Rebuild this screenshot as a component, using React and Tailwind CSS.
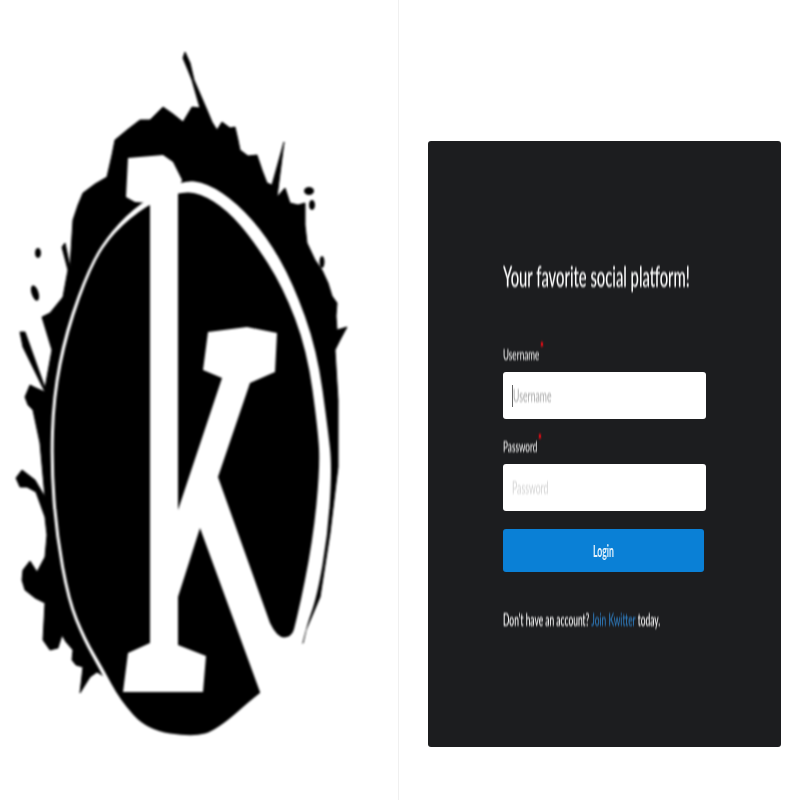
const blob = "M183,58 L185,52 L190,63 L194,80 L207,110 L212,122 L217,130 L222,122 L230,128 L235,127 L238,140 L240,150 L248,156 L257,155 L262,170 L267,183 L272,185 L284,142 L277,197 L285,188 L290,203 L298,205 L305,203 L305,225 L307,243 L315,260 L322,270 L328,283 L332,296 L337,303 L336,316 L337,330 L347,327 L340,340 L335,350 L338,400 L338,467 L330,533 L320,597 L306,630 L303,643 L280,650 L200,700 L110,680 L97,672 L90,677 L80,693 L83,667 L76,665 L72,660 L73,650 L66,642 L62,635 L58,648 L50,650 L43,640 L45,603 L35,598 L25,590 L22,580 L23,570 L30,561 L37,572 L45,557 L47,535 L45,517 L36,492 L27,487 L20,487 L16,478 L22,470 L35,480 L45,497 L40,443 L33,410 L28,405 L25,397 L30,385 L36,388 L45,392 L23,347 L20,332 L25,332 L45,388 L52,350 L42,317 L50,313 L63,297 L68,270 L62,247 L65,243 L70,267 L73,220 L78,205 L83,193 L95,184 L107,177 L112,155 L115,140 L127,130 L140,120 L150,120 L163,107 L173,114 L183,122 L192,107 L200,108 L192,80 L188,70 Z";

const ringOuter = [[182,180],[207,183],[237,203],[267,237],[293,283],[317,350],[328,430],[332,467],[328,533],[317,597],[305,630],[290,700],[193,760],[150,740],[115,700],[100,670],[83,640],[67,600],[55,533],[50,467],[52,397],[65,330],[90,263],[112,230],[140,203]];
const inner = [[178,192],[200,193],[227,210],[253,240],[283,287],[307,350],[318,430],[320,467],[313,540],[297,620],[280,680],[260,692],[217,730],[193,737],[147,730],[120,700],[103,668],[86,639],[70,600],[58,533],[53,467],[55,397],[68,332],[92,265],[114,232],[147,205]];

function smooth(pts) {
  const mid = (a, b) => [(a[0] + b[0]) / 2, (a[1] + b[1]) / 2];
  const n = pts.length;
  const start = mid(pts[n - 1], pts[0]);
  let d = `M${start[0]},${start[1]}`;
  for (let i = 0; i < n; i++) {
    const m = mid(pts[i], pts[(i + 1) % n]);
    d += ` Q${pts[i][0]},${pts[i][1]} ${m[0]},${m[1]}`;
  }
  return d + " Z";
}

const kay = "M128,158 L163,155 L173,162 L182,180 L178,192 L178,510 L222,378 L203,370 L208,332 L247,327 L277,333 L275,372 L250,383 L218,477 L270,623 Q278,640 287,637 Q293,636 297,622 L300,645 L300,770 L262,770 L260,692 L200,528 L178,597 L178,645 L206,656 L203,692 L123,692 L128,653 L150,643 L150,203 L135,202 L126,197 Z";

function Logo() {
  return (
    <svg viewBox="0 0 398 800" className="w-full h-full blur-[0.8px]">
      <path d={blob} fill="#000" stroke="#000" strokeWidth="1" strokeLinejoin="round" />
      <ellipse cx="38" cy="253" rx="3" ry="5" fill="#000" />
      <ellipse cx="35" cy="293" rx="3.5" ry="8" fill="#000" transform="rotate(-18 35 293)" />
      <ellipse cx="309" cy="191" rx="5" ry="4" fill="#000" />
      <ellipse cx="312" cy="205" rx="3" ry="5" fill="#000" />
      <ellipse cx="322" cy="262" rx="2.5" ry="6" fill="#000" />
      <path d={smooth(ringOuter)} fill="#fff" />
      <path d={smooth(inner)} fill="#000" />
      <path d={kay} fill="#fff" />
    </svg>
  );
}

function Squeezed({ className, children }) {
  return (
    <div className={"whitespace-nowrap origin-left scale-x-[0.51] blur-[0.8px] " + className}>
      {children}
    </div>
  );
}

function Field({ label, placeholder, caret, labelClass, textClass }) {
  return (
    <div>
      <div className={labelClass}>
        <Squeezed className="text-[16px] leading-[16px] font-medium text-[#e8e8e8]">
          {label}
          <span className="relative -top-[5px] left-[1px] font-bold text-[#ff0a14] text-[18px] leading-[16px]">*</span>
        </Squeezed>
      </div>
      <div className="flex items-center bg-white rounded-[3px] h-[47px] w-[203px] pl-[9px] blur-[0.7px]">
        {caret && <span className="w-px h-[22px] bg-[#666] shrink-0" />}
        <Squeezed className={"text-[17px] leading-[20px] " + textClass}>
          {placeholder}
        </Squeezed>
      </div>
    </div>
  );
}

export default function App() {
  return (
    <div className="flex w-[800px] h-[800px] bg-white overflow-hidden font-['Lato','Liberation_Sans',sans-serif]">
      <div className="w-[399px] h-full shrink-0 border-r border-[#f0f0f0]">
        <Logo />
      </div>
      <div className="flex-1 pl-[29px] pt-[141px]">
        <div className="w-[353px] h-[606px] bg-[#1c1d1f] rounded-[3px] pl-[75px] pt-[118px] flex flex-col">
          <Squeezed className="text-[29px] leading-[34px] font-medium text-white">
            Your favorite social platform!
          </Squeezed>
          <Field
            label="Username"
            placeholder="Username"
            caret
            labelClass="mt-[52px] mb-[10px]"
            textClass="text-[#a8a8a8]"
          />
          <Field
            label="Password"
            placeholder="Password"
            labelClass="mt-[18px] mb-[10px]"
            textClass="text-[#d4d4d4]"
          />
          <div className="mt-[18px] w-[201px] h-[43px] bg-[#0a80d6] rounded-[3px] flex items-center justify-center blur-[0.6px]">
            <div className="whitespace-nowrap scale-x-[0.51] text-[17px] font-bold text-[#e6f2fa]">Login</div>
          </div>
          <Squeezed className="mt-[38px] text-[16.5px] leading-[20px] font-medium text-white">
            Don't have an account? <a className="text-[#2f7fc4]">Join Kwitter</a> today.
          </Squeezed>
        </div>
      </div>
    </div>
  );
}
